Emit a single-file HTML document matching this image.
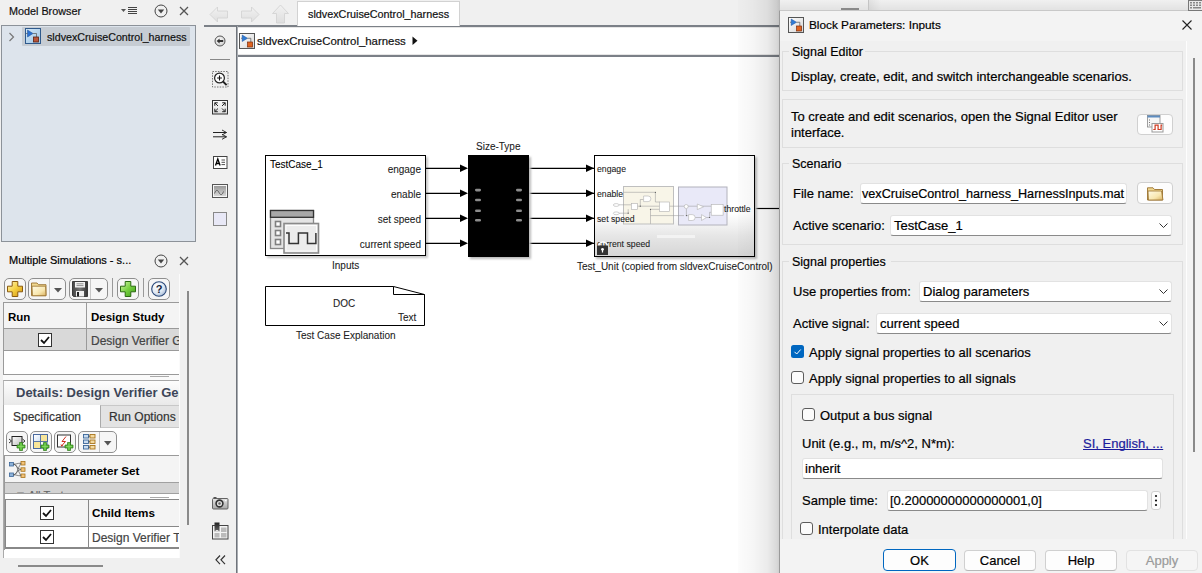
<!DOCTYPE html>
<html><head><meta charset="utf-8">
<style>
*{box-sizing:border-box;margin:0;padding:0}
html,body{width:1202px;height:573px;overflow:hidden;background:#f0f0f0;font-family:"Liberation Sans",sans-serif;color:#000}
.a{position:absolute}
.t{position:absolute;white-space:nowrap;line-height:1;-webkit-text-stroke:0.2px currentColor}
svg{position:absolute;overflow:visible}
.t[style*="font-weight:700"]{-webkit-text-stroke:0}
.t[style*="font-size:10px"],.t[style*="font-size:8.7px"]{-webkit-text-stroke:0.08px currentColor}
</style></head><body>

<!-- ============ LEFT PANEL ============ -->
<div class="t" style="left:9px;top:6px;font-size:10.8px;color:#111">Model Browser</div>
<!-- header icons -->
<svg style="left:120px;top:0px" width="20" height="16"><path d="M1 9h5l-2.5 3z" fill="#555"/><path d="M8 7.5h9M8 9.5h9M8 11.5h9M8 13.5h9" stroke="#444" stroke-width="1"/></svg>
<svg style="left:154px;top:4px" width="14" height="14"><circle cx="7" cy="7" r="6" fill="none" stroke="#444" stroke-width="1"/><path d="M3.8 5.5h6.4L7 9.5z" fill="#444"/></svg>
<svg style="left:179px;top:6px" width="10" height="10"><path d="M1 1L9 9M9 1L1 9" stroke="#555" stroke-width="1.3"/></svg>

<div class="a" style="left:1px;top:25px;width:195px;height:217px;background:#dde4ec;border:1px solid #8c9299"></div>
<div class="a" style="left:22px;top:27px;width:168px;height:19px;background:#c6ccd3;border-radius:1px"></div>
<svg style="left:8px;top:32px" width="8" height="10"><path d="M1.5 1l4 4-4 4" fill="none" stroke="#777" stroke-width="1.2"/></svg>
<svg style="left:25px;top:28px" width="16" height="16"><defs><linearGradient id="gtr" x1="0" y1="0" x2="1" y2="1"><stop offset="0" stop-color="#d4e8f8"/><stop offset="1" stop-color="#9cc3e3"/></linearGradient></defs><rect x="0.5" y="0.5" width="15" height="15" fill="url(#gtr)" stroke="#2f5a8c"/><path d="M2.5 2v7l5.5-3.5z" fill="#2a70d0" stroke="#1a4a90" stroke-width="0.5"/><path d="M1 5.5h1.5M8 5.5h3.5v3.5" fill="none" stroke="#555" stroke-width="0.7"/><rect x="8.5" y="9" width="5" height="5" fill="#b8553a" stroke="#5a2010" stroke-width="0.8"/></svg>
<div class="t" style="left:47px;top:32px;font-size:10.7px;color:#111">sldvexCruiseControl_harness</div>

<div class="t" style="left:9px;top:255px;font-size:11px;color:#000">Multiple Simulations - s...</div>
<svg style="left:154px;top:254px" width="14" height="14"><circle cx="7" cy="7" r="6" fill="none" stroke="#444" stroke-width="1"/><path d="M3.8 5.5h6.4L7 9.5z" fill="#444"/></svg>
<svg style="left:179px;top:256px" width="10" height="10"><path d="M1 1L9 9M9 1L1 9" stroke="#555" stroke-width="1.3"/></svg>


<!-- multi sim toolbar -->
<div class="a" style="left:4px;top:278px;width:22px;height:22px;border:1px solid #8f8f8f;border-radius:5px;background:#f6f6f6"></div>
<svg style="left:7px;top:281px" width="16" height="16"><defs><linearGradient id="gyp" x1="0" y1="0" x2="1" y2="1"><stop offset="0" stop-color="#fff6c0"/><stop offset="0.5" stop-color="#f5d040"/><stop offset="1" stop-color="#d09010"/></linearGradient></defs><path d="M5.2 0.5h5.6v4.7h4.7v5.6h-4.7v4.7H5.2v-4.7H0.5V5.2h4.7z" fill="url(#gyp)" stroke="#8a5a10" stroke-width="1"/></svg>
<div class="a" style="left:28px;top:278px;width:38px;height:22px;border:1px solid #8f8f8f;border-radius:5px;background:#f6f6f6"></div>
<div class="a" style="left:49px;top:279px;width:1px;height:20px;background:#c8c8c8"></div>
<svg style="left:31px;top:282px" width="17" height="15"><path d="M0.5 1h5.5l1.5 1.7h7.5v11H0.5z" fill="#f0d890" stroke="#9a7230" stroke-width="0.9"/><path d="M1.5 13.7l-0.5-9.5h13.5l0.5 9.5z" fill="url(#gfold)" stroke="#9a7230" stroke-width="0.8"/></svg>
<svg style="left:54px;top:288px" width="9" height="5"><path d="M0 0h8l-4 4.5z" fill="#555"/></svg>
<div class="a" style="left:69px;top:278px;width:39px;height:22px;border:1px solid #8f8f8f;border-radius:5px;background:#f6f6f6"></div>
<div class="a" style="left:90px;top:279px;width:1px;height:20px;background:#c8c8c8"></div>
<svg style="left:72px;top:281px" width="17" height="16"><defs><linearGradient id="gsv" x1="0" y1="0" x2="1" y2="0"><stop offset="0" stop-color="#444"/><stop offset="0.5" stop-color="#777"/><stop offset="1" stop-color="#333"/></linearGradient></defs><path d="M0.5 0.5h15v15H1.5l-1-1z" fill="url(#gsv)" stroke="#222" stroke-width="0.8"/><rect x="3" y="1" width="10" height="5.5" fill="#f2f2f2"/><path d="M4.5 2.8h7M4.5 4.6h7" stroke="#666" stroke-width="0.7"/><rect x="4" y="10" width="8" height="5.5" fill="#f0f0f0"/><rect x="5" y="11" width="2" height="4.5" fill="#222"/></svg>
<svg style="left:95px;top:288px" width="9" height="5"><path d="M0 0h8l-4 4.5z" fill="#555"/></svg>
<div class="a" style="left:112px;top:278px;width:1px;height:19px;background:#999"></div>
<div class="a" style="left:117px;top:278px;width:22px;height:22px;border:1px solid #8f8f8f;border-radius:5px;background:#f6f6f6"></div>
<svg style="left:120px;top:281px" width="16" height="16"><defs><linearGradient id="ggp" x1="0" y1="0" x2="1" y2="1"><stop offset="0" stop-color="#d8f8b0"/><stop offset="0.5" stop-color="#78d040"/><stop offset="1" stop-color="#3a9a18"/></linearGradient></defs><path d="M5.2 0.5h5.6v4.7h4.7v5.6h-4.7v4.7H5.2v-4.7H0.5V5.2h4.7z" fill="url(#ggp)" stroke="#2a6a10" stroke-width="1"/></svg>
<div class="a" style="left:143px;top:278px;width:1px;height:19px;background:#999"></div>
<div class="a" style="left:148px;top:278px;width:22px;height:22px;border:1px solid #8f8f8f;border-radius:5px;background:#f6f6f6"></div>
<svg style="left:151px;top:281px" width="16" height="16"><defs><radialGradient id="ghp" cx="0.35" cy="0.3" r="0.8"><stop offset="0" stop-color="#ffffff"/><stop offset="0.6" stop-color="#dde6f2"/><stop offset="1" stop-color="#9fb4d0"/></radialGradient></defs><circle cx="8" cy="8" r="7.3" fill="url(#ghp)" stroke="#2c4a7a" stroke-width="1.1"/><text x="8" y="12.3" font-size="11" font-weight="700" text-anchor="middle" fill="#141e3c" font-family="Liberation Sans">?</text></svg>

<!-- panel white area edge -->
<div class="a" style="left:187px;top:291px;width:2px;height:234px;background:#8a8a8a"></div>
<div class="a" style="left:179px;top:274px;width:1px;height:284px;background:#fbfbfb"></div>

<!-- table 1 -->
<div class="a" style="left:3px;top:302px;width:176px;height:73px;background:#fff;border-left:1px solid #9a9a9a;border-bottom:1px solid #9a9a9a"></div>
<div class="a" style="left:3px;top:302px;width:176px;height:1px;background:#9a9a9a"></div>
<div class="a" style="left:4px;top:303px;width:175px;height:26px;background:#f4f4f4;border-bottom:1px solid #9a9a9a"></div>
<div class="a" style="left:86px;top:303px;width:1px;height:48px;background:#9a9a9a"></div>
<div class="a" style="left:4px;top:329px;width:175px;height:22px;background:#d9d9d9;border-bottom:1px solid #9a9a9a"></div>
<div class="a" style="left:86px;top:303px;width:1px;height:48px;background:#9a9a9a"></div>
<div class="t" style="left:8px;top:312px;font-size:11.5px;font-weight:700;color:#000">Run</div>
<div class="t" style="left:91px;top:312px;font-size:11.5px;font-weight:700;color:#000">Design Study</div>
<svg style="left:38px;top:333px" width="14" height="14"><rect x="0.5" y="0.5" width="13" height="13" fill="#fff" stroke="#333"/><path d="M3 7l3 3 5-6" fill="none" stroke="#111" stroke-width="1.8"/></svg>
<div class="a" style="left:87px;top:330px;width:92px;height:20px;overflow:hidden"><div class="t" style="left:4px;top:5px;font-size:12px;color:#444">Design Verifier Generated Tests</div></div>


<!-- details -->
<div class="a" style="left:3px;top:375px;width:176px;height:5px;background:#fafafa"></div>
<div class="a" style="left:150px;top:376px;width:19px;height:1px;background:#aaa"></div>
<div class="a" style="left:3px;top:380px;width:176px;height:25px;background:linear-gradient(#fdfdfd,#e9e9e9);border-top:1px solid #a8a8a8;border-left:1px solid #b8b8b8"></div>
<div class="a" style="left:4px;top:380px;width:175px;height:25px;overflow:hidden"><div class="t" style="left:12px;top:6px;font-size:13px;font-weight:700;color:#3d4658">Details: Design Verifier Generated</div></div>
<div class="a" style="left:3px;top:405px;width:176px;height:23px;background:#fff;border-left:1px solid #aaa"></div>
<div class="a" style="left:100px;top:405px;width:79px;height:23px;background:#e3e3e3;border-left:1px solid #aaa;border-top:1px solid #c8c8c8;border-bottom:1px solid #c8c8c8"></div>
<div class="t" style="left:13px;top:411px;font-size:12px;color:#333">Specification</div>
<div class="a" style="left:101px;top:405px;width:78px;height:23px;overflow:hidden"><div class="t" style="left:8px;top:6px;font-size:12px;color:#333">Run Options</div></div>

<!-- details content -->
<div class="a" style="left:3px;top:428px;width:176px;height:130px;background:#fff;border-left:1px solid #aaa"></div>
<div class="a" style="left:4px;top:455px;width:1px;height:95px;background:#9a9a9a"></div>


<!-- details toolbar -->
<div class="a" style="left:6px;top:431px;width:22px;height:22px;border:1px solid #8f8f8f;border-radius:5px;background:#f6f6f6"></div><svg style="left:6px;top:431px" width="22" height="22"><defs><linearGradient id="gblk" x1="0" y1="0" x2="1" y2="1"><stop offset="0" stop-color="#fff"/><stop offset="1" stop-color="#bdbdbd"/></linearGradient></defs><rect x="6" y="5.5" width="10" height="9" fill="url(#gblk)" stroke="#222" stroke-width="1"/><path d="M3 8l2.5 2-2.5 2M16.5 8l2.5 2-2.5 2" fill="none" stroke="#222" stroke-width="0.9"/><path d="M13.5 11.5h3v2.5h2.5v3h-2.5v2.5h-3v-2.5h-2.5v-3h2.5z" fill="#5cbf3a" stroke="#2c7a18" stroke-width="0.7" stroke-linejoin="round"/><path d="M15 12.5v6M12 15.5h6" stroke="#b8f09a" stroke-width="0.6" opacity="0.6"/></svg>
<div class="a" style="left:30px;top:431px;width:22px;height:22px;border:1px solid #8f8f8f;border-radius:5px;background:#f6f6f6"></div><svg style="left:30px;top:431px" width="22" height="22"><defs><linearGradient id="gcel" x1="0" y1="0" x2="1" y2="1"><stop offset="0" stop-color="#fff"/><stop offset="1" stop-color="#cfe0f5"/></linearGradient></defs><rect x="3.5" y="3.5" width="14" height="14" fill="#f7e59a" stroke="#4a6aa0" stroke-width="1"/><rect x="4" y="4" width="6.5" height="6.5" fill="url(#gcel)"/><rect x="11" y="11" width="6.5" height="6.5" fill="url(#gcel)"/><path d="M10.5 3.5v14M3.5 10.5h14" stroke="#4a6aa0" stroke-width="0.9"/><path d="M13.5 11.5h3v2.5h2.5v3h-2.5v2.5h-3v-2.5h-2.5v-3h2.5z" fill="#5cbf3a" stroke="#2c7a18" stroke-width="0.7" stroke-linejoin="round"/><path d="M15 12.5v6M12 15.5h6" stroke="#b8f09a" stroke-width="0.6" opacity="0.6"/></svg>
<div class="a" style="left:54px;top:431px;width:22px;height:22px;border:1px solid #8f8f8f;border-radius:5px;background:#f6f6f6"></div><svg style="left:54px;top:431px" width="22" height="22"><rect x="3.5" y="4" width="13" height="12" fill="#fff" stroke="#333" stroke-width="1"/><path d="M12 5.5L8 10.5h3.5L7.5 15" fill="none" stroke="#d03020" stroke-width="1"/><path d="M6.5 13.2l0.8 2.2 2-1z" fill="#d03020"/><path d="M13.5 11.5h3v2.5h2.5v3h-2.5v2.5h-3v-2.5h-2.5v-3h2.5z" fill="#5cbf3a" stroke="#2c7a18" stroke-width="0.7" stroke-linejoin="round"/><path d="M15 12.5v6M12 15.5h6" stroke="#b8f09a" stroke-width="0.6" opacity="0.6"/></svg>
<div class="a" style="left:78px;top:431px;width:39px;height:22px;border:1px solid #8f8f8f;border-radius:5px;background:#f6f6f6"></div>
<div class="a" style="left:99px;top:432px;width:1px;height:20px;background:#c0c0c0"></div>
<svg style="left:78px;top:431px" width="22" height="22"><g stroke-width="0.9"><rect x="5.5" y="3.5" width="5" height="3.5" fill="#c9dcf0" stroke="#3b6699"/><rect x="5.5" y="9" width="5" height="3.5" fill="#c9dcf0" stroke="#3b6699"/><rect x="5.5" y="14.5" width="5" height="3.5" fill="#c9dcf0" stroke="#3b6699"/><rect x="12" y="3.5" width="5" height="3.5" fill="#f3d9a0" stroke="#a8741c"/><rect x="12" y="9" width="5" height="3.5" fill="#f3d9a0" stroke="#a8741c"/><rect x="12" y="14.5" width="5" height="3.5" fill="#f3d9a0" stroke="#a8741c"/></g><path d="M10.5 5.2h1.5M10.5 10.7h1.5M10.5 16.2h1.5" stroke="#444" stroke-width="0.8"/></svg>
<svg style="left:104px;top:441px" width="8" height="5"><path d="M0 0h7.5l-3.75 4.5z" fill="#555"/></svg>

<div class="a" style="left:4px;top:455px;width:175px;height:1px;background:#9a9a9a"></div>
<div class="a" style="left:5px;top:456px;width:174px;height:27px;background:#f4f4f4"></div>
<svg style="left:9px;top:461px" width="17" height="17"><g stroke-width="0.8"><rect x="0.5" y="1.5" width="4" height="3.5" fill="#8fb3d9" stroke="#3b6699"/><rect x="0.5" y="12" width="4" height="3.5" fill="#8fb3d9" stroke="#3b6699"/><rect x="12" y="0.5" width="4" height="3.5" fill="#f1c27a" stroke="#a8741c"/><rect x="12" y="6.8" width="4" height="3.5" fill="#f1c27a" stroke="#a8741c"/><rect x="12" y="13" width="4" height="3.5" fill="#f1c27a" stroke="#a8741c"/></g><path d="M4.5 3.2C8 3.2 8 8.5 12 14.8M4.5 3.2C8 3.2 8 8.5 12 8.5M4.5 3.2C8 3.2 8 2.2 12 2.2M4.5 13.8C8 13.8 8 8.5 12 2.2M4.5 13.8C8 13.8 8 8.5 12 8.5M4.5 13.8C8 13.8 8 14.8 12 14.8" fill="none" stroke="#555" stroke-width="0.7"/></svg>
<div class="t" style="left:31px;top:465px;font-size:11.7px;font-weight:700;color:#000">Root Parameter Set</div>
<div class="a" style="left:5px;top:482px;width:174px;height:1px;background:#a0a0a0"></div><div class="a" style="left:5px;top:483px;width:174px;height:10px;background:#d3d3d3;overflow:hidden"><div class="t" style="left:10px;top:7px;font-size:11px;color:#666">&#9660; All Tests</div></div><div class="a" style="left:5px;top:493px;width:174px;height:1px;background:#a0a0a0"></div>
<div class="a" style="left:150px;top:497px;width:19px;height:1px;background:#aaa"></div>

<!-- table 2 -->
<div class="a" style="left:5px;top:499px;width:174px;height:50px;background:#fff;border-left:1px solid #888;border-top:1px solid #888;border-bottom:2px solid #888"></div>
<div class="a" style="left:6px;top:500px;width:173px;height:26px;background:#f4f4f4"></div>
<div class="a" style="left:6px;top:526px;width:173px;height:1px;background:#888"></div>
<div class="a" style="left:88px;top:500px;width:1px;height:48px;background:#888"></div>
<svg style="left:40px;top:506px" width="14" height="14"><rect x="0.5" y="0.5" width="13" height="13" fill="#fff" stroke="#333"/><path d="M3 7l3 3 5-6" fill="none" stroke="#111" stroke-width="1.8"/></svg>
<svg style="left:40px;top:530px" width="14" height="14"><rect x="0.5" y="0.5" width="13" height="13" fill="#fff" stroke="#333"/><path d="M3 7l3 3 5-6" fill="none" stroke="#111" stroke-width="1.8"/></svg>
<div class="t" style="left:92px;top:507px;font-size:11.7px;font-weight:700;color:#000">Child Items</div>
<div class="a" style="left:89px;top:527px;width:90px;height:21px;overflow:hidden"><div class="t" style="left:3px;top:5px;font-size:12px;color:#444">Design Verifier Tests</div></div>

<div class="a" style="left:18px;top:565px;width:85px;height:2px;background:#8a8a8a"></div>

<!-- ============ VERTICAL TOOLBAR ============ -->
<div class="a" style="left:204px;top:25px;width:998px;height:2px;background:#7b8087"></div>
<div class="a" style="left:236px;top:26px;width:1px;height:547px;background:#6f747b"></div><div class="a" style="left:237px;top:26px;width:1px;height:547px;background:#a9adb2"></div>
<svg style="left:214px;top:35px" width="12" height="12"><defs><radialGradient id="gbk" cx="0.4" cy="0.35" r="0.7"><stop offset="0" stop-color="#fafafa"/><stop offset="1" stop-color="#cfcfcf"/></radialGradient></defs><circle cx="6" cy="6" r="5" fill="url(#gbk)" stroke="#555" stroke-width="1"/><path d="M2.6 6l3-2.6v1.6h3.6v2H5.6v1.6z" fill="#333"/></svg>
<div class="a" style="left:210px;top:59px;width:20px;height:1px;background:#888"></div>
<svg style="left:212px;top:71px" width="18" height="17"><rect x="0.5" y="0.5" width="15.5" height="15.5" fill="none" stroke="#555" stroke-width="0.8" stroke-dasharray="1.5 1.2"/><circle cx="7.5" cy="7" r="4.9" fill="#fff" stroke="#222" stroke-width="1.2"/><path d="M7.5 4.6v4.8M5.1 7h4.8" stroke="#111" stroke-width="1.1"/><path d="M11 10.5l3.6 3.6" stroke="#222" stroke-width="1.9"/></svg>
<svg style="left:212px;top:100px" width="16" height="15"><defs><linearGradient id="gfit" x1="0" y1="0" x2="0" y2="1"><stop offset="0" stop-color="#fafafa"/><stop offset="1" stop-color="#dcdcdc"/></linearGradient></defs><rect x="0.5" y="0.5" width="15" height="13.5" fill="url(#gfit)" stroke="#333" stroke-width="1"/><path d="M2.8 2.8l3.2 3.2M2.8 2.8v3M2.8 2.8h3M13.2 2.8l-3.2 3.2M13.2 2.8v3M13.2 2.8h-3M2.8 11.7l3.2-3.2M2.8 11.7v-3M2.8 11.7h3M13.2 11.7l-3.2-3.2M13.2 11.7v-3M13.2 11.7h-3" stroke="#222" stroke-width="1" fill="none"/></svg>
<svg style="left:213px;top:129px" width="15" height="11"><path d="M0 3.5h13.5M0 7.8h13.5" stroke="#222" stroke-width="1"/><path d="M9 1l4.5 2.5L9 6M9 5.3l4.5 2.5L9 10.3" fill="none" stroke="#222" stroke-width="0.9"/></svg>
<svg style="left:213px;top:156px" width="15" height="13"><rect x="0.5" y="0.5" width="13.5" height="12" fill="#fff" stroke="#444"/><path d="M2.5 9.5l2.3-6.5 2.3 6.5M3.3 7.5h3" stroke="#000" stroke-width="1.3" fill="none"/><path d="M8.5 4h3.5M8.5 6.3h3.5M8.5 8.6h3.5" stroke="#222" stroke-width="0.8"/></svg>
<svg style="left:212px;top:184px" width="16" height="14"><rect x="0.5" y="0.5" width="15" height="13" fill="#f6f6f6" stroke="#555"/><rect x="2" y="2" width="12" height="10" fill="url(#gimg)"/><defs><linearGradient id="gimg" x1="0" y1="0" x2="0" y2="1"><stop offset="0" stop-color="#999"/><stop offset="1" stop-color="#d8d8d8"/></linearGradient></defs><path d="M2.5 9.5c1.5-4 3-4 4.5-1s3 3 4.5-1" fill="none" stroke="#555" stroke-width="0.9"/></svg>
<div class="a" style="left:213px;top:212px;width:14px;height:14px;background:#e8e8f6;border:1px solid #888"></div>
<svg style="left:212px;top:496px" width="17" height="14"><defs><linearGradient id="gcam" x1="0" y1="0" x2="0" y2="1"><stop offset="0" stop-color="#e6e6e6"/><stop offset="1" stop-color="#a8a8a8"/></linearGradient></defs><rect x="0.5" y="2.5" width="15.5" height="10.5" rx="1" fill="url(#gcam)" stroke="#555" stroke-width="0.9"/><rect x="1.5" y="1" width="3" height="1.6" fill="#555"/><circle cx="7.5" cy="7.5" r="3.4" fill="#ddd" stroke="#333" stroke-width="1.6"/><circle cx="7.5" cy="7.5" r="1.2" fill="#666"/><rect x="13" y="4" width="1.5" height="1.2" fill="#fff"/></svg>
<svg style="left:212px;top:522px" width="17" height="18"><rect x="0.5" y="3.5" width="15.5" height="13.5" fill="#f4f4f4" stroke="#444" stroke-width="1"/><defs><linearGradient id="gbm" x1="0" y1="0" x2="0" y2="1"><stop offset="0" stop-color="#222"/><stop offset="1" stop-color="#666"/></linearGradient></defs><rect x="2.5" y="0.5" width="5" height="9" fill="url(#gbm)"/><path d="M2.5 9.5q2.5-3 5 0" fill="#fff"/><rect x="9" y="5.5" width="5.5" height="4.5" fill="#bbb"/><rect x="2.5" y="11" width="5" height="4.5" fill="#bbb"/><rect x="9" y="11" width="5.5" height="4.5" fill="#bbb"/></svg>
<svg style="left:215px;top:555px" width="11" height="10"><path d="M5 0.5L1 4.8l4 4.3M10 0.5L6 4.8l4 4.3" fill="none" stroke="#333" stroke-width="1.2"/></svg>


<!-- ============ TAB BAR / BREADCRUMB ============ -->
<svg style="left:209px;top:6px" width="20" height="17"><path d="M1 8.5L8.5 1v4h10v7h-10v4z" fill="url(#garr)" stroke="#d0d0d0" stroke-width="0.8"/><defs><linearGradient id="garr" x1="0" y1="0" x2="0" y2="1"><stop offset="0" stop-color="#f2f2f2"/><stop offset="1" stop-color="#dedede"/></linearGradient></defs></svg>
<svg style="left:240px;top:6px" width="20" height="17"><path d="M19 8.5L11.5 1v4h-10v7h10v4z" fill="url(#garr)" stroke="#d0d0d0" stroke-width="0.8"/></svg>
<svg style="left:272px;top:4px" width="18" height="20"><path d="M8.5 1L16.5 9.5h-4V19h-8V9.5h-4z" fill="url(#garr)" stroke="#d0d0d0" stroke-width="0.8"/></svg>
<div class="a" style="left:297px;top:1px;width:163px;height:25px;background:#fff;border:1px solid #d2d2d2;border-bottom:none"></div>
<div class="t" style="left:308px;top:9px;font-size:10.8px;color:#111">sldvexCruiseControl_harness</div>
<div class="a" style="left:238px;top:27px;width:964px;height:28px;background:#fff;border-top:1px solid #e6e6e6;border-bottom:1px solid #e6e6e6"></div>
<div class="a" style="left:238px;top:55px;width:964px;height:2px;background:#7b8087"></div>
<svg style="left:239px;top:33px" width="16" height="16"><defs><linearGradient id="gico" x1="0" y1="0" x2="1" y2="1"><stop offset="0" stop-color="#fff"/><stop offset="1" stop-color="#d6d6d6"/></linearGradient></defs><rect x="0.5" y="0.5" width="15" height="15" fill="url(#gico)" stroke="#555"/><path d="M3.2 2v6.5l5.3-3.25z" fill="#2e7bd6" stroke="#1b4f96" stroke-width="0.5"/><path d="M2 5.25h1.2M8.5 5.25h3.3v4" fill="none" stroke="#555" stroke-width="0.7"/><rect x="8.6" y="9" width="5" height="5" fill="#e0641f" stroke="#7a2a0a" stroke-width="0.7"/></svg>
<div class="t" style="left:257px;top:36px;font-size:11.4px;color:#111">sldvexCruiseControl_harness</div>
<svg style="left:412px;top:36px" width="6" height="10"><path d="M0.5 0.5L5.5 4.75L0.5 9z" fill="#111"/></svg>

<!-- canvas -->
<div class="a" style="left:238px;top:57px;width:964px;height:516px;background:#fff"></div>


<!-- ============ BLOCKS ============ -->
<!-- Inputs block -->
<div class="a" style="left:267px;top:157px;width:161px;height:101px;background:#c8c8c8;filter:blur(1px)"></div>
<div class="a" style="left:265px;top:155px;width:161px;height:101px;background:#fff;border:1px solid #000"></div>
<div class="t" style="left:270px;top:159.5px;font-size:10px">TestCase_1</div>
<div class="t" style="left:326px;top:164.5px;width:95px;text-align:right;font-size:10px;color:#222">engage</div>
<div class="t" style="left:326px;top:189.5px;width:95px;text-align:right;font-size:10px;color:#222">enable</div>
<div class="t" style="left:326px;top:214.5px;width:95px;text-align:right;font-size:10px;color:#222">set speed</div>
<div class="t" style="left:326px;top:239.5px;width:95px;text-align:right;font-size:10px;color:#222">current speed</div>
<svg style="left:265px;top:200px" width="60" height="56">
 <rect x="5.5" y="10.5" width="43" height="38" fill="#e4e4e4" stroke="#888" stroke-width="1.3"/>
 <rect x="5.5" y="10.5" width="43" height="6.8" fill="#a8a8a8" stroke="#333" stroke-width="1.3"/>
 <rect x="10.5" y="21.5" width="5" height="5" fill="#fff" stroke="#808080" stroke-width="1.6"/>
 <rect x="10.5" y="30.5" width="5" height="5" fill="#fff" stroke="#808080" stroke-width="1.6"/>
 <rect x="10.5" y="39.5" width="5" height="5" fill="#fff" stroke="#808080" stroke-width="1.6"/>
 <rect x="19" y="23.5" width="34.5" height="29.5" fill="#ececec" stroke="#8a8a8a" stroke-width="1.6"/>
 <rect x="21" y="25.5" width="30.5" height="25.5" fill="none" stroke="#fff" stroke-width="0.8"/>
 <path d="M21 33h3v10.5h9.4v-10.5h9.1v10.5h8.4v-10.5" fill="none" stroke="#333" stroke-width="1.5"/>
</svg>
<div class="t" style="left:332px;top:261px;font-size:10px;color:#222">Inputs</div>

<!-- lines -->
<svg style="left:426px;top:150px" width="360" height="110">
 <g stroke="#000" stroke-width="1.2">
  <path d="M0 18.3h35M0 43.3h35M0 68.3h35M0 93.3h35"/>
  <path d="M103 18.3h86M103 43.3h86M103 68.3h86M103 93.3h86"/>
  <path d="M329 58.5h24"/>
 </g>
 <g fill="#000">
  <path d="M34 14.6l8 3.7-8 3.7zM34 39.6l8 3.7-8 3.7zM34 64.6l8 3.7-8 3.7zM34 89.6l8 3.7-8 3.7z"/>
  <path d="M160 14.6l8 3.7-8 3.7zM160 39.6l8 3.7-8 3.7zM160 64.6l8 3.7-8 3.7zM160 89.6l8 3.7-8 3.7z"/>
 </g>
</svg>

<!-- Size-Type -->
<div class="t" style="left:476px;top:141.5px;font-size:10px;color:#222">Size-Type</div>
<div class="a" style="left:470px;top:157px;width:61px;height:102px;background:#bbb;filter:blur(1px)"></div>
<div class="a" style="left:468px;top:155px;width:61px;height:102px;background:#000"></div>
<svg style="left:474px;top:188px" width="50" height="36"><g fill="#8c8c8c"><rect x="1" y="0.8" width="6" height="2.6" rx="1.3"/><rect x="1" y="10.7" width="6" height="2.6" rx="1.3"/><rect x="1" y="21.5" width="6" height="2.6" rx="1.3"/><rect x="1" y="31" width="6" height="2.6" rx="1.3"/><rect x="42" y="0.8" width="6" height="2.6" rx="1.3"/><rect x="42" y="10.7" width="6" height="2.6" rx="1.3"/><rect x="42" y="21.5" width="6" height="2.6" rx="1.3"/><rect x="42" y="31" width="6" height="2.6" rx="1.3"/></g></svg>

<!-- Test_Unit -->
<div class="a" style="left:596px;top:157px;width:161px;height:102px;background:#bbb;filter:blur(1px)"></div>
<div class="a" style="left:594px;top:155px;width:161px;height:102px;background:linear-gradient(#fff 0%,#fff 58%,#e6e6e6 80%,#d6d6d6 100%);border:1px solid #000"></div>
<svg style="left:594px;top:155px" width="162" height="102">
 <rect x="29.5" y="31.5" width="50" height="37.5" fill="#f8f5e8" stroke="#bfbfbf" stroke-width="1"/>
 <rect x="84.5" y="32" width="48.5" height="38" fill="#e9e9f8" stroke="#b2b2bc" stroke-width="1"/>
 <g fill="none" stroke="#9a9a9a" stroke-width="0.55">
  <path d="M25 49.8h12.4M25 58.2h9.2v-4M43.3 51.2h22.3M46.3 51.2v-6.7h3.3M29.5 37.3h31.9v9.7h4.2M56.5 54.3h9.1M56.5 54.3v14.5M56.5 60.6h33.5M75.4 51.2h42M92.4 53.7v6.9h2.2M101.2 62.5h6.3M112.4 62.5h3.2v-5.2h1.6"/>
 </g>
 <g fill="#fff" stroke="#b0b0b0" stroke-width="0.6">
  <ellipse cx="22.2" cy="50" rx="2.9" ry="1.4"/><ellipse cx="22.2" cy="58.3" rx="2.9" ry="1.4"/>
  <rect x="37.4" y="48.5" width="5.9" height="5.8"/>
  <path d="M49.6 41h4.5a2.8 2.8 0 0 1 0 5.6h-4.5z"/>
  <rect x="65.6" y="47" width="9.8" height="9.4"/>
  <circle cx="92.2" cy="51.5" r="2"/>
  <path d="M103.3 49l6.3 2.8-6.3 2.8z"/>
  <path d="M94.6 59.6h3.6a2.95 2.95 0 0 1 0 5.9h-3.6z"/>
  <path d="M107.5 59.6l4.9 2.95-4.9 2.95z"/>
  <rect x="117.2" y="49.4" width="11.9" height="10.8"/>
 </g>
 <g fill="#555"><circle cx="46.3" cy="51.2" r="0.6"/><circle cx="61.4" cy="37.3" r="0.6"/><circle cx="56.5" cy="54.3" r="0.6"/><circle cx="34.2" cy="58.2" r="0.6"/><circle cx="92.4" cy="60.6" r="0.6"/><circle cx="115.6" cy="62.5" r="0.6"/></g>
 <rect x="63" y="80" width="38" height="3" fill="#f3f3f3"/>
</svg>
<div class="t" style="left:597px;top:165px;font-size:8.7px;color:#222">engage</div>
<div class="t" style="left:597px;top:190px;font-size:8.7px;color:#222">enable</div>
<div class="t" style="left:597px;top:215px;font-size:8.7px;color:#222">set speed</div>
<div class="t" style="left:597px;top:240px;font-size:8.7px;color:#222">current speed</div>
<div class="t" style="left:724px;top:205px;font-size:8.7px;color:#222">throttle</div>
<svg style="left:594px;top:155px" width="20" height="102">
 <path d="M4.5 91.5a4.5 4.5 0 0 1 9 0" fill="none" stroke="#fff" stroke-width="1.6"/>
 <rect x="3" y="90.5" width="11" height="9.5" fill="#333"/>
 <circle cx="8.5" cy="94.3" r="1.4" fill="#fff"/><rect x="7.9" y="94.5" width="1.2" height="3" fill="#fff"/>
</svg>
<div class="t" style="left:577px;top:261.5px;font-size:10px;color:#222">Test_Unit (copied from sldvexCruiseControl)</div>

<!-- DOC block -->
<svg style="left:265px;top:286px" width="162" height="42">
 <path d="M0.5 0.5H128.5L159.5 8.5V39.5H0.5z" fill="#fff" stroke="#000" stroke-width="1"/>
 <path d="M128.5 0.5v8h31" fill="none" stroke="#000" stroke-width="1"/>
</svg>
<div class="t" style="left:333px;top:298.5px;font-size:10px;color:#222">DOC</div>
<div class="t" style="left:398px;top:313px;font-size:10px;color:#222">Text</div>
<div class="t" style="left:296px;top:330.5px;font-size:10px;color:#222">Test Case Explanation</div>


<!-- ============ DIALOG ============ -->
<div class="a" style="left:738px;top:0px;width:42px;height:573px;background:linear-gradient(90deg,rgba(0,0,0,0.01) 0%,rgba(0,0,0,0.035) 35%,rgba(0,0,0,0.08) 70%,rgba(0,0,0,0.15) 92%,rgba(0,0,0,0.2) 100%)"></div>
<div class="a" style="left:779px;top:10px;width:423px;height:563px;background:#f3f3f3;border-left:1px solid #9a9a9a;border-top:1px solid #c8c8c8"></div>
<div class="a" style="left:780px;top:0px;width:422px;height:10px;background:linear-gradient(rgba(0,0,0,0.0),rgba(0,0,0,0.06))"></div>
<div class="a" style="left:868px;top:0px;width:1px;height:10px;background:#c4c4c4"></div>
<div class="a" style="left:869px;top:0px;width:12px;height:10px;background:linear-gradient(90deg,rgba(0,0,0,0.06),rgba(0,0,0,0))"></div>
<div class="a" style="left:841px;top:8px;width:18px;height:2px;background:#8a8a8a"></div>
<svg style="left:788px;top:17px" width="16" height="16"><defs><linearGradient id="gico2" x1="0" y1="0" x2="1" y2="1"><stop offset="0" stop-color="#fff"/><stop offset="1" stop-color="#d6d6d6"/></linearGradient></defs><rect x="0.5" y="0.5" width="15" height="15" fill="url(#gico2)" stroke="#555"/><path d="M3.2 2v6.5l5.3-3.25z" fill="#2e7bd6" stroke="#1b4f96" stroke-width="0.5"/><path d="M2 5.25h1.2M8.5 5.25h3.3v4" fill="none" stroke="#555" stroke-width="0.7"/><rect x="8.6" y="9" width="5" height="5" fill="#e0641f" stroke="#7a2a0a" stroke-width="0.7"/></svg>
<div class="t" style="left:809px;top:20px;font-size:11.8px;color:#000">Block Parameters: Inputs</div>
<svg style="left:1182px;top:20px" width="10" height="10"><path d="M0.5 0.5l9 9M9.5 0.5l-9 9" stroke="#222" stroke-width="1.1"/></svg>
<div class="a" style="left:780px;top:41px;width:406px;height:498px;background:#f0f0f0"></div>
<div class="a" style="left:1186px;top:41px;width:1px;height:498px;background:#fdfdfd"></div>
<div class="a" style="left:1193px;top:58px;width:2px;height:394px;background:#8a8a8a"></div>

<svg style="left:1188px;top:0px" width="14" height="11"><rect x="0.5" y="0.5" width="16" height="10" fill="#e8e8e8" stroke="#777" stroke-width="1"/><g fill="#888"><rect x="2" y="2" width="2" height="1.5"/><rect x="5" y="2" width="2" height="1.5"/><rect x="8" y="2" width="2" height="1.5"/><rect x="11" y="2" width="2" height="1.5"/><rect x="2" y="4.5" width="2" height="1.5"/><rect x="5" y="4.5" width="2" height="1.5"/><rect x="8" y="4.5" width="2" height="1.5"/><rect x="11" y="4.5" width="2" height="1.5"/><rect x="2" y="7" width="2" height="1.5"/><rect x="5" y="7" width="8" height="1.5"/></g></svg>
<!-- group: Signal Editor -->
<div class="a" style="left:782px;top:51px;width:401px;height:40px;border:1px solid #dedede"></div>
<div class="a" style="left:789px;top:46px;width:76px;height:12px;background:#f0f0f0"></div>
<div class="t" style="left:792px;top:46px;font-size:12.5px;color:#000">Signal Editor</div>
<div class="t" style="left:791px;top:70px;font-size:13px;color:#000">Display, create, edit, and switch interchangeable scenarios.</div>

<div class="a" style="left:782px;top:99px;width:401px;height:49px;border:1px solid #dedede"></div>
<div class="t" style="left:791px;top:110px;font-size:13px;color:#000">To create and edit scenarios, open the Signal Editor user</div>
<div class="t" style="left:791px;top:126px;font-size:13px;color:#000">interface.</div>
<div class="a" style="left:1137px;top:114px;width:36px;height:21px;background:#fdfdfd;border:1px solid #d0d0d0;border-radius:4px"></div>
<svg style="left:1147px;top:115px" width="17" height="18"><rect x="0.5" y="0.5" width="12.5" height="11.5" fill="#f6f6f6" stroke="#888" stroke-width="0.8"/><rect x="0.5" y="0.5" width="12.5" height="2" fill="#5d8cc0"/><g fill="#777"><rect x="2" y="4.5" width="1" height="1"/><rect x="2" y="7" width="1" height="1"/><rect x="2" y="9.5" width="1" height="1"/></g><rect x="5" y="8.5" width="11" height="8.5" fill="#fff" stroke="#999" stroke-width="1"/><path d="M6.3 14.5h1.8v-4.3h3v4.3h3v-4.3h1" fill="none" stroke="#d03a20" stroke-width="1.2"/></svg>

<!-- group: Scenario -->
<div class="a" style="left:782px;top:163px;width:401px;height:82px;border:1px solid #dedede"></div>
<div class="a" style="left:789px;top:157px;width:58px;height:12px;background:#f0f0f0"></div>
<div class="t" style="left:792px;top:158px;font-size:12.5px;color:#000">Scenario</div>
<div class="t" style="left:793px;top:187px;font-size:13px;color:#000">File name:</div>
<div class="a" style="left:860px;top:183px;width:267px;height:21px;background:#fff;border:1px solid #e2e2e2;border-bottom:1px solid #8a8a8a;border-radius:3px;overflow:hidden"><div class="t" style="left:1px;top:4px;font-size:12.65px;color:#000">vexCruiseControl_harness_HarnessInputs.mat</div></div>
<div class="a" style="left:1137px;top:182px;width:36px;height:22px;background:#fdfdfd;border:1px solid #d0d0d0;border-radius:4px"></div>
<svg style="left:1147px;top:187px" width="17" height="14"><defs><linearGradient id="gfold" x1="0" y1="0" x2="1" y2="1"><stop offset="0" stop-color="#fffbe6"/><stop offset="0.6" stop-color="#f8e7b0"/><stop offset="1" stop-color="#d8b060"/></linearGradient></defs><path d="M0.5 0.8h5.5l1.5 1.7h8v10.5H0.5z" fill="#f0d890" stroke="#9a7230" stroke-width="0.9"/><path d="M1.5 13l-0.5-9h13.5l1.5 9z" fill="url(#gfold)" stroke="#9a7230" stroke-width="0.8"/></svg>
<div class="t" style="left:793px;top:219px;font-size:13px;color:#000">Active scenario:</div>
<div class="a" style="left:890px;top:215px;width:282px;height:21px;background:#fff;border:1px solid #e2e2e2;border-bottom:1px solid #8a8a8a;border-radius:3px"></div>
<div class="t" style="left:894px;top:219px;font-size:13px;color:#000">TestCase_1</div>
<svg style="left:1159px;top:223px" width="10" height="6"><path d="M0.5 0.5l4 4 4-4" fill="none" stroke="#333" stroke-width="1"/></svg>

<!-- group: Signal properties -->
<div class="a" style="left:782px;top:261px;width:401px;height:290px;border:1px solid #dedede"></div>
<div class="a" style="left:789px;top:255px;width:102px;height:12px;background:#f0f0f0"></div>
<div class="t" style="left:792px;top:256px;font-size:12.5px;color:#000">Signal properties</div>
<div class="t" style="left:793px;top:285px;font-size:13px;color:#000">Use properties from:</div>
<div class="a" style="left:919px;top:281px;width:253px;height:21px;background:#fff;border:1px solid #e2e2e2;border-bottom:1px solid #8a8a8a;border-radius:3px"></div>
<div class="t" style="left:923px;top:285px;font-size:13px;color:#000">Dialog parameters</div>
<svg style="left:1159px;top:289px" width="10" height="6"><path d="M0.5 0.5l4 4 4-4" fill="none" stroke="#333" stroke-width="1"/></svg>
<div class="t" style="left:793px;top:317px;font-size:13px;color:#000">Active signal:</div>
<div class="a" style="left:876px;top:313px;width:296px;height:21px;background:#fff;border:1px solid #e2e2e2;border-bottom:1px solid #8a8a8a;border-radius:3px"></div>
<div class="t" style="left:880px;top:317px;font-size:13px;color:#000">current speed</div>
<svg style="left:1159px;top:321px" width="10" height="6"><path d="M0.5 0.5l4 4 4-4" fill="none" stroke="#333" stroke-width="1"/></svg>

<svg style="left:791px;top:345px" width="14" height="14"><rect x="0" y="0" width="13" height="13" rx="2.5" fill="#0067c0"/><path d="M3.5 6.8l2.2 2.2 4-4.5" fill="none" stroke="#fff" stroke-width="1"/></svg>
<div class="t" style="left:809px;top:346px;font-size:13px;color:#000">Apply signal properties to all scenarios</div>
<svg style="left:791px;top:371px" width="14" height="14"><rect x="0.5" y="0.5" width="12" height="12" rx="2.5" fill="#fbfbfb" stroke="#5c5c5c" stroke-width="1"/></svg>
<div class="t" style="left:809px;top:372px;font-size:13px;color:#000">Apply signal properties to all signals</div>

<!-- inner group -->
<div class="a" style="left:791px;top:394px;width:383px;height:157px;border:1px solid #dedede"></div>
<svg style="left:802px;top:408px" width="14" height="14"><rect x="0.5" y="0.5" width="12" height="12" rx="2.5" fill="#fbfbfb" stroke="#5c5c5c" stroke-width="1"/></svg>
<div class="t" style="left:820px;top:409px;font-size:13px;color:#000">Output a bus signal</div>
<div class="t" style="left:802px;top:437px;font-size:13px;color:#000">Unit (e.g., m, m/s^2, N*m):</div>
<div class="t" style="left:1083px;top:437px;font-size:13px;color:#1c1c9c;text-decoration:underline;text-decoration-skip-ink:none">SI, English, ...</div>
<div class="a" style="left:802px;top:458px;width:361px;height:21px;background:#fff;border:1px solid #e2e2e2;border-bottom:1px solid #8a8a8a;border-radius:3px"></div>
<div class="t" style="left:805px;top:462px;font-size:13px;color:#000">inherit</div>
<div class="t" style="left:802px;top:494px;font-size:13px;color:#000">Sample time:</div>
<div class="a" style="left:887px;top:490px;width:261px;height:21px;background:#fff;border:1px solid #e2e2e2;border-bottom:1px solid #8a8a8a;border-radius:3px"></div>
<div class="t" style="left:890px;top:494px;font-size:13px;color:#000">[0.20000000000000001,0]</div>
<div class="a" style="left:1151px;top:491px;width:10px;height:19px;background:#fdfdfd;border:1px solid #d0d0d0;border-radius:3px"></div>
<svg style="left:1154px;top:494px" width="4" height="14"><circle cx="2" cy="2" r="1.1" fill="#111"/><circle cx="2" cy="6.5" r="1.1" fill="#111"/><circle cx="2" cy="11" r="1.1" fill="#111"/></svg>
<svg style="left:800px;top:522px" width="14" height="14"><rect x="0.5" y="0.5" width="12" height="12" rx="2.5" fill="#fbfbfb" stroke="#5c5c5c" stroke-width="1"/></svg>
<div class="t" style="left:818px;top:523px;font-size:13px;color:#000">Interpolate data</div>

<!-- footer -->
<div class="a" style="left:780px;top:539px;width:422px;height:34px;background:#f3f3f3"></div>
<div class="a" style="left:883px;top:549px;width:73px;height:22px;background:#fdfdfd;border:1px solid #0067c0;border-radius:4px"></div>
<div class="t" style="left:883px;top:554px;width:73px;text-align:center;font-size:13px;color:#000">OK</div>
<div class="a" style="left:964px;top:550px;width:72px;height:21px;background:#fdfdfd;border:1px solid #d0d0d0;border-bottom-color:#b8b8b8;border-radius:4px"></div>
<div class="t" style="left:964px;top:554px;width:72px;text-align:center;font-size:13px;color:#000">Cancel</div>
<div class="a" style="left:1045px;top:550px;width:72px;height:21px;background:#fdfdfd;border:1px solid #d0d0d0;border-bottom-color:#b8b8b8;border-radius:4px"></div>
<div class="t" style="left:1045px;top:554px;width:72px;text-align:center;font-size:13px;color:#000">Help</div>
<div class="a" style="left:1126px;top:550px;width:72px;height:21px;background:#f5f5f5;border:1px solid #e2e2e2;border-radius:4px"></div>
<div class="t" style="left:1126px;top:554px;width:72px;text-align:center;font-size:13px;color:#9a9a9a">Apply</div>

</body></html>
